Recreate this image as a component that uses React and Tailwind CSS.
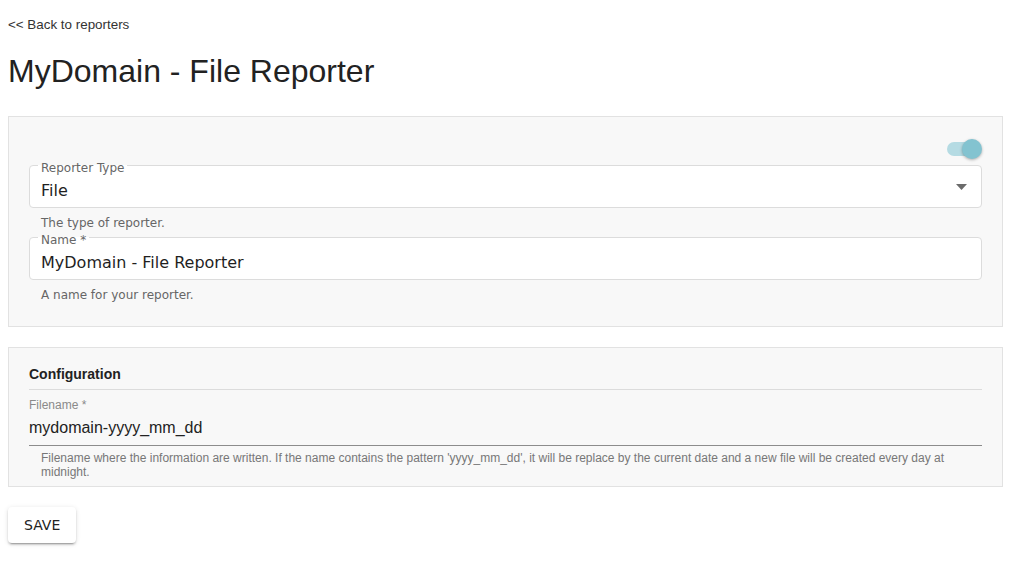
import React from "react";

const dejavu = { fontFamily: '"DejaVu Sans", sans-serif' };
const lib = { fontFamily: '"Liberation Sans", Arial, sans-serif' };

function OutlinedField({ label, value, select }) {
  return (
    <div className="relative h-[43px] rounded-[4px] border border-[#dcdcdc] bg-white flex items-center pl-[11px] pr-[14px]">
      <span className="absolute left-[8px] top-[-5px] px-[3px] text-[12px] leading-[14px] text-[#666] bg-[linear-gradient(to_bottom,#f8f8f8_4px,#ffffff_4px)]">
        {label}
      </span>
      <span className="flex-1 mt-[8px] text-[16px] leading-[19px] text-[#1f1f1f]">{value}</span>
      {select && (
        <svg width="11" height="6" viewBox="0 0 11 6" className="shrink-0">
          <path d="M0 0 L11 0 L5.5 6 Z" fill="#6b6b6b" />
        </svg>
      )}
    </div>
  );
}

export default function App() {
  return (
    <div className="min-h-screen bg-white pl-2 pr-3 pt-[17px] pb-8" style={lib}>
      <a className="block text-[13.4px] leading-[15px] text-[#333]">&lt;&lt; Back to reporters</a>
      <h1 className="mt-[21px] text-[32px] leading-[37px] text-[#222] font-normal">MyDomain - File Reporter</h1>

      <div className="mt-[26px] border border-[#e2e2e2] bg-[#f8f8f8] px-[20px] pt-[22px] pb-[24px]" style={dejavu}>
        <div className="flex justify-end">
          <div className="relative w-[35px] h-[20px]">
            <div className="absolute left-0 top-[3px] w-[32px] h-[14px] rounded-full bg-[#b5dbe3]" />
            <div className="absolute right-0 top-0 w-[20px] h-[20px] rounded-full bg-[#83c3d0] shadow-[0_1px_3px_rgba(0,0,0,0.3)]" />
          </div>
        </div>
        <div className="mt-[6px]">
          <OutlinedField label="Reporter Type" value="File" select />
        </div>
        <p className="mt-[8px] pl-[12px] text-[12px] leading-[14px] text-[#666]">The type of reporter.</p>
        <div className="mt-[7px]">
          <OutlinedField label="Name *" value="MyDomain - File Reporter" />
        </div>
        <p className="mt-[8px] pl-[12px] text-[12px] leading-[14px] text-[#666]">A name for your reporter.</p>
      </div>

      <div className="mt-[20px] border border-[#e2e2e2] bg-[#f8f8f8] px-[20px] pt-[18px] pb-[7px]">
        <div className="border-b border-[#dcdcdc] pb-[7px] text-[14px] leading-[16px] font-bold text-[#222]">
          Configuration
        </div>
        <div className="mt-[8px] text-[12px] leading-[14px] text-[#8a8a8a]">Filename *</div>
        <div className="mt-[6px] pb-[8px] border-b border-[#8c8c8c] text-[16px] leading-[19px] text-[#222]">
          mydomain-yyyy_mm_dd
        </div>
        <p className="mt-[5px] px-[12px] text-[12px] leading-[14px] text-[#777]">
          Filename where the information are written. If the name contains the pattern 'yyyy_mm_dd', it will be replace by the current date and a new file will be created every day at midnight.
        </p>
      </div>

      <button
        className="mt-[20px] h-[36px] px-[16px] rounded-[4px] bg-white text-[14px] text-[#222] shadow-[0_3px_1px_-2px_rgba(0,0,0,0.2),0_2px_2px_0_rgba(0,0,0,0.14),0_1px_5px_0_rgba(0,0,0,0.12)]"
        style={dejavu}
      >
        SAVE
      </button>
    </div>
  );
}
